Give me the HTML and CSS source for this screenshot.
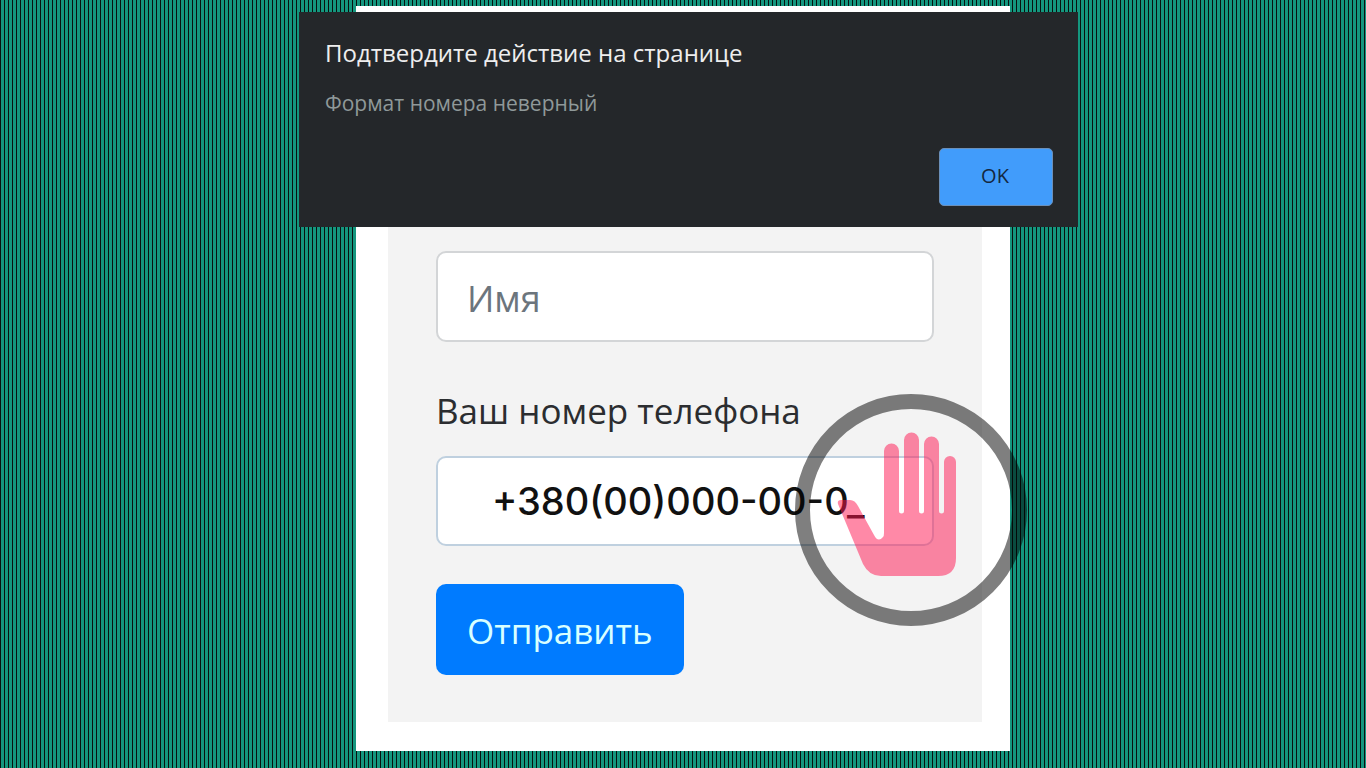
FILE: index.html
```html
<!DOCTYPE html>
<html lang="ru">
<head>
  <meta charset="UTF-8">
  <meta name="viewport" content="width=device-width, initial-scale=1.0">
  <title>Форма заявки</title>
  <link rel="stylesheet" href="styles.css">
</head>
<body>

  <main class="page">
    <form class="order-form">
      <input class="field" type="text" name="name" placeholder="Имя" aria-label="Имя">

      <label class="field-label" for="phone">Ваш номер телефона</label>
      <div class="phone-row">
        <input class="field field-phone" type="tel" id="phone" name="phone" value="+380(00)000-00-0_">
        <!-- stop hand over the phone field -->
        <svg class="stop-hand" viewBox="0 0 232 232" aria-hidden="true">
          <circle cx="116" cy="116" r="108.500" fill="none" stroke="#000" stroke-opacity=".5" stroke-width="15"/>
          <path fill="#ff1450" fill-opacity=".5" d="M89 157V57a7.500 7.500 0 0 1 15 0V117a2.500 2.500 0 0 0 5 0V46a7.500 7.500 0 0 1 15 0V117a2.500 2.500 0 0 0 5 0V50a7.500 7.500 0 0 1 15 0V117a2.500 2.500 0 0 0 5 0V68a6 6 0 0 1 12 0V164Q161 182 143 182H86Q74 182 68 170L43 110Q42 106 46 106H55Q60 106 63 112L79 141Q83 149 88 143Q89 142 89 139Z"/>
        </svg>
      </div>

      <button class="submit" type="button">Отправить</button>
    </form>
  </main>

  <div class="alert" role="alertdialog" aria-labelledby="alert-title" aria-describedby="alert-text">
    <h2 class="alert-title" id="alert-title">Подтвердите действие на странице</h2>
    <p class="alert-text" id="alert-text">Формат номера неверный</p>
    <button class="alert-ok" type="button">OK</button>
  </div>

</body>
</html>
```

FILE: styles.css
```css
* {
  box-sizing: border-box;
}

body {
  margin: 0;
  padding: 6px 0 17px;
  min-height: 100vh;
  font-family: "Open Sans", "Noto Sans", sans-serif;
  background-image: linear-gradient(to right, #081210 1px, #14967e 1px);
  background-size: 4px 4px;
}

.page {
  width: 100%;
  max-width: 654px;
  margin: 0 auto;
  padding: 29px 28px 29px 32px;
  background: #fff;
}

.order-form {
  padding: 216px 48px 47px;
  background: #f3f3f3;
}

.field {
  display: block;
  width: 100%;
  height: 91px;
  padding: 4px 29px 0;
  border: 2px solid #d3d5d7;
  border-radius: 10px;
  background: #fff;
  color: #111;
  font-family: inherit;
  font-size: 36px;
}

.field::placeholder {
  color: #6c757d;
  opacity: 1;
}

.field-label {
  display: block;
  margin: 44px 0 20px;
  color: #2b2d30;
  font-size: 35px;
  line-height: 50px;
}

.phone-row {
  position: relative;
}

.field-phone {
  height: 90px;
  padding: 0 54px;
  border-color: #bfd0df;
  font-family: Inter, sans-serif;
  font-size: 38px;
  font-weight: 500;
}

/* ring hangs over the right edge of the form */
.stop-hand {
  position: absolute;
  top: -62px;
  right: -93px;
  width: 232px;
  height: 232px;
  pointer-events: none;
}

.submit {
  display: block;
  margin-top: 38px;
  height: 91px;
  padding: 2px 31px 0;
  border: 0;
  border-radius: 10px;
  background: #007bff;
  color: #d8ffff;
  font-family: inherit;
  font-size: 35px;
}

.alert {
  position: absolute;
  top: 12px;
  left: 50%;
  width: 779px;
  max-width: 100%;
  margin-left: -384px;
  padding: 23px 25px 21px 26px;
  background: #24272a;
}

.alert-title {
  margin: 0;
  color: #eee;
  font-size: 24px;
  font-weight: 400;
  line-height: 36px;
}

.alert-text {
  margin: 16px 0 29px;
  color: #8f9999;
  font-size: 21px;
  line-height: 32px;
}

.alert-ok {
  display: block;
  width: 114px;
  height: 58px;
  margin-left: auto;
  padding: 0 8px 4px 6px;
  border: 1px solid #6b8fb8;
  border-radius: 5px;
  background: #419cfb;
  color: #14283f;
  font-family: inherit;
  font-size: 20px;
}
```
